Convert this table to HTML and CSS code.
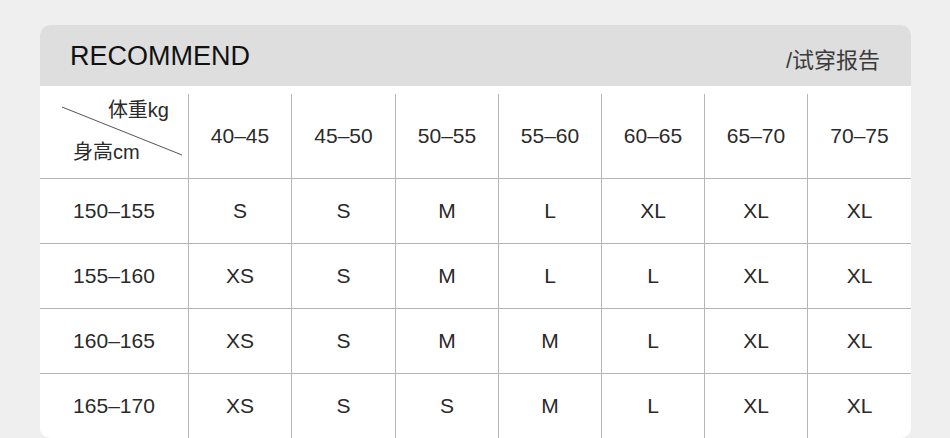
FILE: index.html
```html
<!DOCTYPE html>
<html lang="zh">
<head>
<meta charset="utf-8">
<title>RECOMMEND</title>
<link rel="stylesheet" href="styles.css">
</head>
<body>
<div class="card">
  <div class="card-head">
    <span class="title">RECOMMEND</span>
    <span class="subtitle">/试穿报告</span>
  </div>
  <div class="card-body">
    <div class="grid">
      <div class="cell corner">
        <svg class="diag" width="148" height="84" viewBox="0 0 148 84"><line x1="22" y1="13" x2="142" y2="61" stroke="#555" stroke-width="1"/></svg>
        <span class="corner-top">体重kg</span>
        <span class="corner-bottom">身高cm</span>
      </div>
      <div class="cell">40–45</div>
      <div class="cell">45–50</div>
      <div class="cell">50–55</div>
      <div class="cell">55–60</div>
      <div class="cell">60–65</div>
      <div class="cell">65–70</div>
      <div class="cell last">70–75</div>

      <div class="cell">150–155</div>
      <div class="cell">S</div>
      <div class="cell">S</div>
      <div class="cell">M</div>
      <div class="cell">L</div>
      <div class="cell">XL</div>
      <div class="cell">XL</div>
      <div class="cell last">XL</div>

      <div class="cell">155–160</div>
      <div class="cell">XS</div>
      <div class="cell">S</div>
      <div class="cell">M</div>
      <div class="cell">L</div>
      <div class="cell">L</div>
      <div class="cell">XL</div>
      <div class="cell last">XL</div>

      <div class="cell">160–165</div>
      <div class="cell">XS</div>
      <div class="cell">S</div>
      <div class="cell">M</div>
      <div class="cell">M</div>
      <div class="cell">L</div>
      <div class="cell">XL</div>
      <div class="cell last">XL</div>

      <div class="cell">165–170</div>
      <div class="cell">XS</div>
      <div class="cell">S</div>
      <div class="cell">S</div>
      <div class="cell">M</div>
      <div class="cell">L</div>
      <div class="cell">XL</div>
      <div class="cell last">XL</div>
    </div>
  </div>
</div>
</body>
</html>
```

FILE: styles.css
```css
html, body {
  margin: 0;
  padding: 0;
  background: #efefef;
  font-family: "Liberation Sans", Arial, "Noto Sans CJK SC", sans-serif;
  color: #222;
}

body {
  padding: 25px 0 0 40px;
  height: 438px;
  box-sizing: border-box;
  overflow: hidden;
}

.card {
  width: 871px;
  height: 413px;
  border-radius: 10px;
  overflow: hidden;
  background: #ffffff;
  display: flex;
  flex-direction: column;
}

.card-head {
  height: 61px;
  flex: none;
  background: #dedede;
  display: flex;
  align-items: center;
  justify-content: space-between;
  padding: 0 31px 0 30px;
}

.title {
  font-size: 27px;
  color: #111;
  margin-top: 1px;
}

.subtitle {
  font-size: 22px;
  color: #3a3a3a;
  font-family: "Liberation Sans", "Noto Sans CJK SC", sans-serif;
  margin-top: 4px;
}

.card-body {
  padding-top: 8px;
}

.grid {
  display: grid;
  grid-template-columns: 149px 103px 104px 103px 103px 103px 103px 103px;
  grid-template-rows: 85px 65px 65px 65px 65px;
}

.cell {
  border-right: 1px solid #b5b5b5;
  border-bottom: 1px solid #b5b5b5;
  display: flex;
  align-items: center;
  justify-content: center;
  font-size: 21px;
  color: #2a2a2a;
}

.cell.last {
  border-right: none;
}

.corner {
  position: relative;
  flex-direction: column;
  align-items: stretch;
  justify-content: space-between;
  padding: 4px 19px 14px 33px;
  font-size: 20px;
  line-height: 24px;
  font-family: "Liberation Sans", "Noto Sans CJK SC", sans-serif;
}

.diag {
  position: absolute;
  left: 0;
  top: 0;
}

.corner-top {
  align-self: flex-end;
}

.corner-bottom {
  align-self: flex-start;
}
```
